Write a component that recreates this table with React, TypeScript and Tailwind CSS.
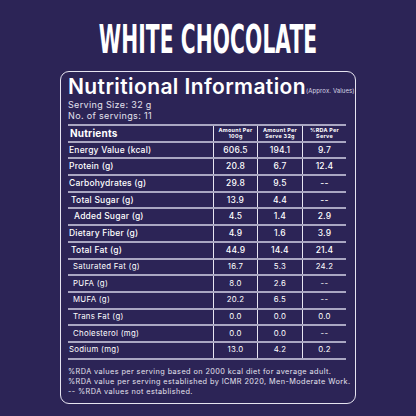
import React from 'react';

type Row = {
  name: string;
  per100: string;
  perServe: string;
  rda: string;
  indent?: string;
  small?: boolean;
};

const rows: Row[] = [
  { name: 'Energy Value (kcal)', per100: '606.5', perServe: '194.1', rda: '9.7' },
  { name: 'Protein (g)', per100: '20.8', perServe: '6.7', rda: '12.4' },
  { name: 'Carbohydrates (g)', per100: '29.8', perServe: '9.5', rda: '--' },
  { name: 'Total Sugar (g)', per100: '13.9', perServe: '4.4', rda: '--', indent: 'pl-[3px]' },
  { name: 'Added Sugar (g)', per100: '4.5', perServe: '1.4', rda: '2.9', indent: 'pl-[6px]' },
  { name: 'Dietary Fiber (g)', per100: '4.9', perServe: '1.6', rda: '3.9' },
  { name: 'Total Fat (g)', per100: '44.9', perServe: '14.4', rda: '21.4', indent: 'pl-[3px]' },
  { name: 'Saturated Fat (g)', per100: '16.7', perServe: '5.3', rda: '24.2', indent: 'pl-[5px]', small: true },
  { name: 'PUFA (g)', per100: '8.0', perServe: '2.6', rda: '--', indent: 'pl-[5px]', small: true },
  { name: 'MUFA (g)', per100: '20.2', perServe: '6.5', rda: '--', indent: 'pl-[5px]', small: true },
  { name: 'Trans Fat (g)', per100: '0.0', perServe: '0.0', rda: '0.0', indent: 'pl-[5px]', small: true },
  { name: 'Cholesterol (mg)', per100: '0.0', perServe: '0.0', rda: '--', indent: 'pl-[5px]', small: true },
  { name: 'Sodium (mg)', per100: '13.0', perServe: '4.2', rda: '0.2', small: true },
];

function Cell({ children, className = '' }: { children: React.ReactNode; className?: string }) {
  return (
    <div className={`flex items-center justify-center border-l border-[#e8e6f2] ${className}`}>
      {children}
    </div>
  );
}

export default function App() {
  return (
    <div
      className="w-[416px] h-[416px] bg-[#2c2456] text-white flex flex-col items-center overflow-hidden"
      style={{ fontFamily: 'Inter, "Noto Sans", sans-serif' }}
    >
      <h1
        className="mt-[23px] h-[32px] flex items-center text-[22.5px] font-bold tracking-[0.1px] scale-y-[1.75] leading-none whitespace-nowrap"
        style={{ fontFamily: '"DejaVu Sans Condensed", "DejaVu Sans", sans-serif' }}
      >
        WHITE CHOCOLATE
      </h1>

      <div className="mt-[16px] w-[296px] h-[333px] border-[1.5px] border-[#e6e4f0] rounded-[9px] pl-[7px] pr-[8px] pt-[3px]">
        <div className="flex items-end whitespace-nowrap">
          <span className="text-[21px] font-semibold leading-[24px] tracking-[0.4px]">Nutritional Information</span>
          <span className="text-[6px] text-[#d8d6e6] mb-[4px] tracking-[0.1px]">(Approx. Values)</span>
        </div>
        <div className="text-[9px] leading-[11px] tracking-[0.35px] text-[#e4e2ee] whitespace-nowrap">
          <div>Serving Size: 32 g</div>
          <div>No. of servings: 11</div>
        </div>

        <div className="mt-[3px] border-t-2 border-[#aaa7c2] w-[278px]">
          <div className="grid grid-cols-[145px_44px_45px_44px] h-[16.7px] border-b-2 border-[#aaa7c2]">
            <div className="flex items-center pl-[2px] text-[10px] font-bold tracking-[0.2px]">Nutrients</div>
            <Cell className="text-[5.4px] font-bold leading-[5.6px] text-center tracking-[0.3px] whitespace-nowrap">
              Amount Per
              <br />
              100g
            </Cell>
            <Cell className="text-[5.4px] font-bold leading-[5.6px] text-center tracking-[0.3px] whitespace-nowrap">
              Amount Per
              <br />
              Serve 32g
            </Cell>
            <Cell className="text-[5.4px] font-bold leading-[5.6px] text-center tracking-[0.3px] whitespace-nowrap">
              %RDA Per
              <br />
              Serve
            </Cell>
          </div>
          {rows.map((r) => (
            <div
              key={r.name}
              className={`grid grid-cols-[145px_44px_45px_44px] h-[16.7px] border-b-2 border-[#aaa7c2] whitespace-nowrap ${
                r.small ? 'text-[7.8px] tracking-[0.3px]' : 'text-[8.5px] font-medium tracking-[0.2px]'
              }`}
            >
              <div className={`flex items-center pl-[1px] ${r.indent ?? ''}`}>{r.name}</div>
              <Cell>{r.per100}</Cell>
              <Cell>{r.perServe}</Cell>
              <Cell>{r.rda}</Cell>
            </div>
          ))}
        </div>

        <div className="mt-[7px] text-[7.3px] leading-[10px] tracking-[0.42px] text-[#e4e2ee] whitespace-nowrap">
          <div>%RDA values per serving based on 2000 kcal diet for average adult.</div>
          <div>%RDA value per serving established by ICMR 2020, Men-Moderate Work.</div>
          <div>-- %RDA values not established.</div>
        </div>
      </div>
    </div>
  );
}
